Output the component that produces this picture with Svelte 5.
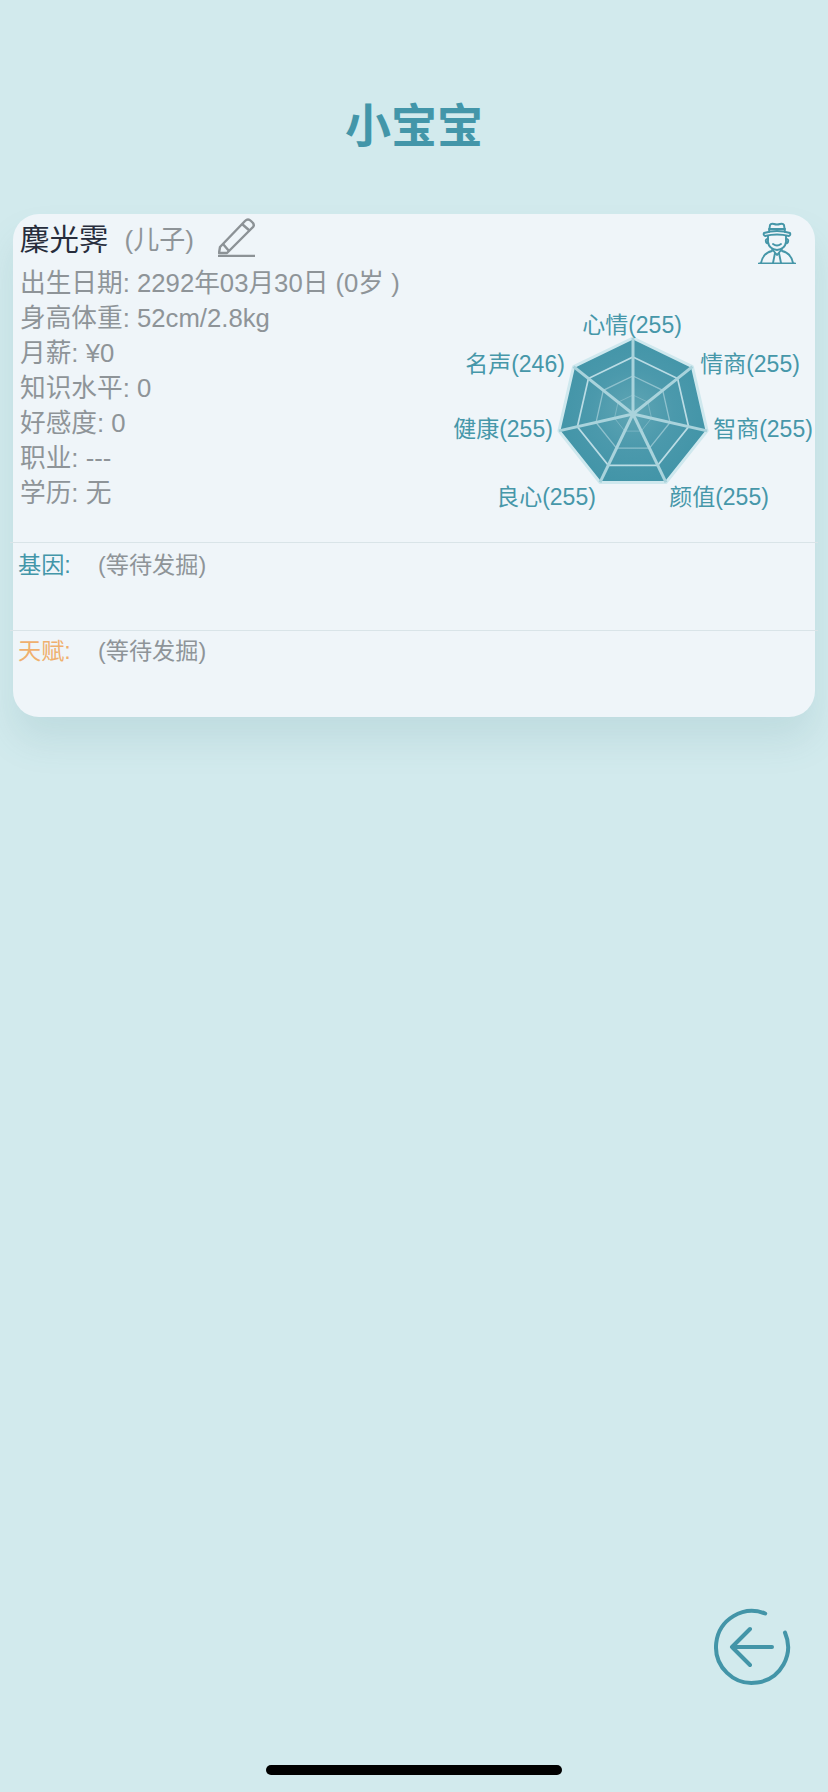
<script lang="ts">
  const cx = 203;
  const cy = 125;
  const radius = 76;

  const info = [
    "出生日期: 2292年03月30日 (0岁 )",
    "身高体重: 52cm/2.8kg",
    "月薪: ¥0",
    "知识水平: 0",
    "好感度: 0",
    "职业: ---",
    "学历: 无",
  ];

  // label centres are relative to the chart box
  const labels = [
    { text: "心情(255)", x: 202, y: 44 },
    { text: "情商(255)", x: 320, y: 83 },
    { text: "智商(255)", x: 333, y: 148 },
    { text: "颜值(255)", x: 289, y: 216 },
    { text: "良心(255)", x: 116, y: 216 },
    { text: "健康(255)", x: 73, y: 148 },
    { text: "名声(246)", x: 85, y: 83 },
  ];

  function vertex(i: number, r: number) {
    const a = -Math.PI / 2 + (i * 2 * Math.PI) / 7;
    return [cx + r * Math.cos(a), cy + r * Math.sin(a)];
  }

  function ring(r: number) {
    return [0, 1, 2, 3, 4, 5, 6].map((i) => vertex(i, r).map((n) => n.toFixed(1)).join(",")).join(" ");
  }

  const rings = [
    { r: 57, w: 1.7, o: 0.85 },
    { r: 38, w: 1.3, o: 0.5 },
    { r: 19, w: 1, o: 0.3 },
  ];
</script>

<div class="page">
  <h1 class="title">小宝宝</h1>

  <section class="card">
    <div class="top">
      <div class="left">
        <div class="name-row">
          <span class="name">麇光霁</span>
          <span class="relation">(儿子)</span>
          <svg class="pencil" viewBox="0 0 38 40" fill="none" stroke="#8c9296" stroke-width="2.4">
            <path d="M2 30 L27 4 Q30 1 33 4 L35 6 Q37 9 34 11 L9 36 L1 36 Z" stroke-linejoin="round" />
            <path d="M24 7 L32 14 M5 27 L11 34" />
            <path d="M0 39 H37" stroke-width="2.6" />
          </svg>
        </div>
        {#each info as line}
          <div class="line">{line}</div>
        {/each}
      </div>

      <div class="right">
        <svg class="avatar" viewBox="0 0 38 42" fill="none" stroke="#4596a8" stroke-width="1.9" stroke-linecap="round" stroke-linejoin="round">
          <path d="M11 10 L12 3 Q13 1 16 2 Q19 3 22 2 Q25 1 26 3 L27 10" />
          <path d="M6 11 Q19 7 32 11 Q33 13 31 14 Q19 11 7 14 Q5 13 6 11 Z" />
          <path d="M11 7 H27" />
          <path d="M10 14 V20 Q11 27 19 28 Q27 27 28 20 V14" />
          <path d="M10 17 Q7 17 8 20 Q9 22 10 21 M28 17 Q31 17 30 20 Q29 22 28 21" />
          <path d="M15 22 Q19 25 23 22" />
          <path d="M14 27 L19 33 L24 27 M17 31 L15 41 M21 31 L23 41" />
          <path d="M14 29 Q5 31 3 41 M24 29 Q33 31 35 41" />
          <path d="M1 41.5 H37" stroke-width="2.2" />
        </svg>

        <svg class="chart" viewBox="0 0 385 240">
          <defs>
            <radialGradient id="fill">
              <stop offset="0%" stop-color="#5fa5b4" />
              <stop offset="55%" stop-color="#4b99ac" />
              <stop offset="100%" stop-color="#4395a8" />
            </radialGradient>
          </defs>
          <polygon points={ring(radius)} fill="url(#fill)" stroke="#cfe8ee" stroke-width="3" stroke-linejoin="round" />
          {#each rings as item}
            <polygon points={ring(item.r)} fill="none" stroke="#cfe8ee" stroke-width={item.w} stroke-opacity={item.o} />
          {/each}
          {#each labels as _, i}
            <line x1={cx} y1={cy} x2={vertex(i, radius)[0]} y2={vertex(i, radius)[1]} stroke="#a9d3dc" stroke-width="3" />
          {/each}
          {#each labels as label}
            <text class="label" x={label.x} y={label.y} text-anchor="middle">{label.text}</text>
          {/each}
        </svg>
      </div>
    </div>

    <div class="row gene">
      <span class="key teal">基因:</span>
      <span class="value">(等待发掘)</span>
    </div>
    <div class="row talent">
      <span class="key orange">天赋:</span>
      <span class="value">(等待发掘)</span>
    </div>
  </section>

  <svg class="back" viewBox="0 0 78 78" fill="none" stroke="#4395a8" stroke-width="4" stroke-linecap="round" stroke-linejoin="round">
    <path d="M52.2 5.5 A36 36 0 1 0 72 24.6" />
    <path d="M19 39 H59 M37 21 L19 39 L37 57" />
  </svg>

  <div class="home"></div>
</div>

<style>
  :global(body) {
    margin: 0;
    background: #d2eaed;
  }

  .page {
    display: flex;
    flex-direction: column;
    height: 1792px;
    font-family: "Liberation Sans", "Noto Sans CJK SC", sans-serif;
  }

  .title {
    margin: 0;
    padding-top: 98px;
    height: 214px;
    box-sizing: border-box;
    text-align: center;
    font-size: 46px;
    line-height: 56px;
    font-weight: 700;
    color: #4396a9;
  }

  .card {
    margin: 0 13px;
    height: 503px;
    display: flex;
    flex-direction: column;
    background: #eff5f9;
    border-radius: 26px;
    box-shadow: 0 24px 36px rgba(70, 130, 140, 0.13);
  }

  .top {
    height: 328px;
    display: flex;
    justify-content: space-between;
  }

  .left {
    padding: 1px 0 0 7px;
  }

  .name-row {
    display: flex;
    align-items: center;
    height: 44px;
    margin-bottom: 7px;
  }

  .name {
    font-size: 29.5px;
    color: #272d3c;
  }

  .relation {
    margin-left: 16px;
    font-size: 26px;
    color: #8e9498;
  }

  .pencil {
    width: 38px;
    height: 40px;
    margin-left: 24px;
  }

  .line {
    font-size: 25.7px;
    line-height: 35px;
    color: #8e9498;
    white-space: nowrap;
  }

  .right {
    width: 385px;
    display: flex;
    flex-direction: column;
    align-items: flex-end;
  }

  .avatar {
    width: 38px;
    height: 42px;
    margin: 8px 19px 0 0;
  }

  .chart {
    width: 385px;
    height: 240px;
    margin-top: 25px;
  }

  .label {
    font-size: 23px;
    fill: #4697a9;
  }

  .row {
    margin: 0 -3px;
    border-top: 1.5px solid #d9e4e8;
    display: flex;
    padding-left: 8px;
    font-size: 23.2px;
    line-height: 32px;
  }

  .gene {
    height: 88px;
    box-sizing: border-box;
    padding-top: 6px;
  }

  .talent {
    height: 87px;
    box-sizing: border-box;
    padding-top: 4px;
  }

  .key {
    width: 80px;
  }

  .teal {
    color: #4396a9;
  }

  .orange {
    color: #efb06e;
  }

  .value {
    color: #8e9498;
  }

  .back {
    position: absolute;
    left: 713px;
    top: 1608px;
    width: 78px;
    height: 78px;
  }

  .home {
    position: absolute;
    left: 266px;
    top: 1765px;
    width: 296px;
    height: 10px;
    border-radius: 5px;
    background: #000;
  }
</style>
